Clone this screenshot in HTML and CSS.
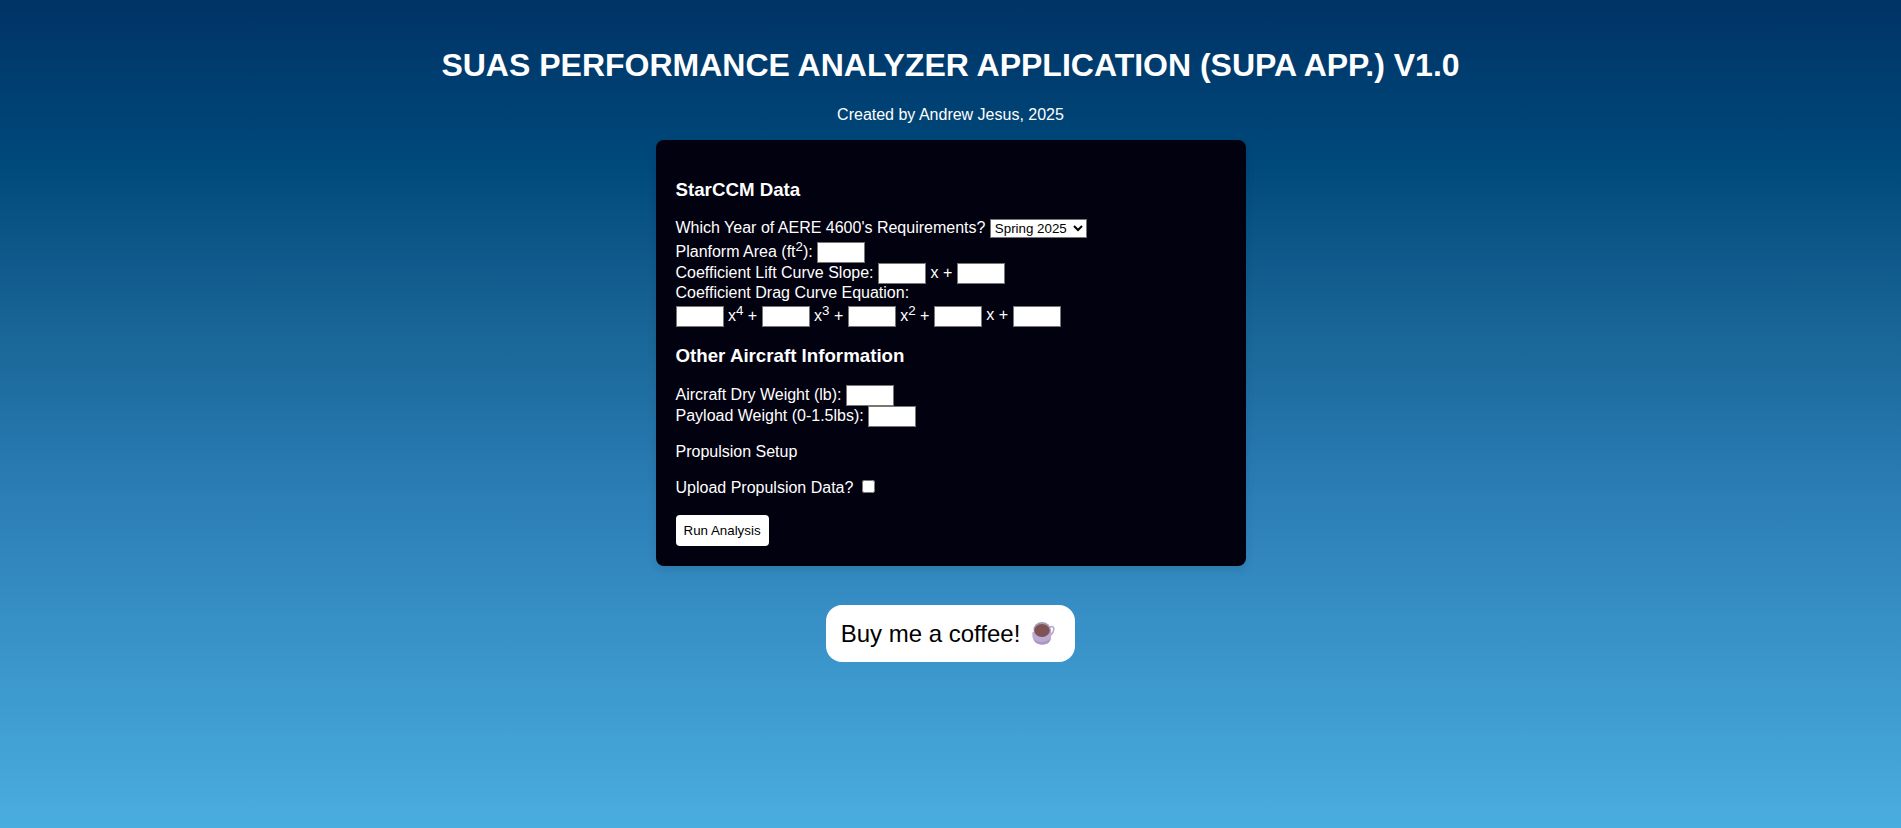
FILE: index.html
```html
<!DOCTYPE html>
<html lang="en">
<head>
<meta charset="utf-8">
<title>SUPA App</title>
<link rel="stylesheet" href="styles.css">
</head>
<body>
<h1 class="title">SUAS PERFORMANCE ANALYZER APPLICATION (SUPA APP.) V1.0</h1>
<p class="credit">Created by Andrew Jesus, 2025</p>
<form class="panel">
  <h3 class="heading">StarCCM Data</h3>
  <div class="row"><label for="year">Which Year of AERE 4600's Requirements?</label> <select id="year" class="year"><option>Spring 2025</option></select></div>
  <div class="row"><label for="area">Planform Area (ft<sup>2</sup>):</label> <input id="area" class="field" type="text"></div>
  <div class="row"><label for="slope">Coefficient Lift Curve Slope:</label> <input id="slope" class="field" type="text"> <label for="lift0">x +</label> <input id="lift0" class="field" type="text"></div>
  <div class="row">Coefficient Drag Curve Equation:</div>
  <div class="row"><input id="drag4" class="field" type="text" aria-label="x to the fourth"> <label for="drag3">x<sup>4</sup> +</label> <input id="drag3" class="field" type="text"> <label for="drag2">x<sup>3</sup> +</label> <input id="drag2" class="field" type="text"> <label for="drag1">x<sup>2</sup> +</label> <input id="drag1" class="field" type="text"> <label for="drag0">x +</label> <input id="drag0" class="field" type="text"></div>
  <h3 class="heading">Other Aircraft Information</h3>
  <div class="row"><label for="dry">Aircraft Dry Weight (lb):</label> <input id="dry" class="field" type="text"></div>
  <div class="row"><label for="payload">Payload Weight (0-1.5lbs):</label> <input id="payload" class="field" type="text"></div>
  <p class="text">Propulsion Setup</p>
  <p class="text"><label for="upload">Upload Propulsion Data?</label> <input id="upload" type="checkbox"></p>
  <button class="run" type="button">Run Analysis</button>
</form>
<a class="coffee" href="#">Buy me a coffee!
  <svg class="cup" viewBox="0 0 32 32" aria-hidden="true">
    <path d="M21 11.500c2-3.500 5.500-2 4.700 1.500s-2.500 5-5 5" fill="none" stroke="#b9a5cf" stroke-width="1.500"/>
    <path d="M4.500 15c-1 7 2 12.500 10 12.500S24 22 23 12z" fill="#bcaad2"/>
    <path d="M6 22c4 4 12 4 17-1-1 4.500-4 6.500-8.500 6.500S7 26 6 22z" fill="#a996c2"/>
    <ellipse cx="14" cy="12.500" rx="8.500" ry="7.500" fill="#a99bb2"/>
    <ellipse cx="14" cy="13.500" rx="7.700" ry="6.500" fill="#7f5355"/>
  </svg>
</a>
</body>
</html>
```
FILE: styles.css
```css
html {
  min-height: 100%;
}

body {
  box-sizing: border-box;
  min-height: 100vh;
  margin: 0;
  padding: 24px 20px;
  display: flex;
  flex-direction: column;
  align-items: center;
  background: linear-gradient(to bottom, #003366 0%, #00497b 20%, #176394 38%, #2b7eb6 60%, #4aade0 100%);
  color: #fff;
  font: 16px "Liberation Sans", Arial, sans-serif;
}

.title {
  margin: 23px 0 22px;
  font-size: 32px;
  text-align: center;
}

.credit {
  margin: 0 0 16px;
}

.panel {
  box-sizing: border-box;
  width: 100%;
  max-width: 590px;
  padding: 21px 20px 20px;
  border-radius: 8px;
  background: #02010f;
  box-shadow: 0 4px 8px rgba(0, 0, 0, 0.1);
}

.heading {
  margin: 18px 0;
}

.field {
  box-sizing: border-box;
  width: 48px;
  height: 21px;
  padding: 1px 2px;
  border: 1px solid #767676;
  background: #fff;
  font-family: "Liberation Sans", Arial, sans-serif;
}

.year {
  height: 19px;
  width: 97px;
  margin-bottom: 1px;
  font-family: "Liberation Sans", Arial, sans-serif;
  background: #fff;
  color: #000;
}

.text {
  margin: 16px 0;
}

.run {
  margin-top: 2px;
  padding: 8px;
  border: 0;
  border-radius: 4px;
  background: #fff;
  color: #000;
  font-family: "Liberation Sans", Arial, sans-serif;
}

.coffee {
  display: flex;
  align-items: center;
  gap: 8px;
  margin-top: 39px;
  padding: 12px 15px;
  border-radius: 16px;
  background: #fff;
  color: #000;
  font-size: 24px;
  line-height: 33px;
  text-decoration: none;
}

.cup {
  width: 32px;
  height: 32px;
}
```
